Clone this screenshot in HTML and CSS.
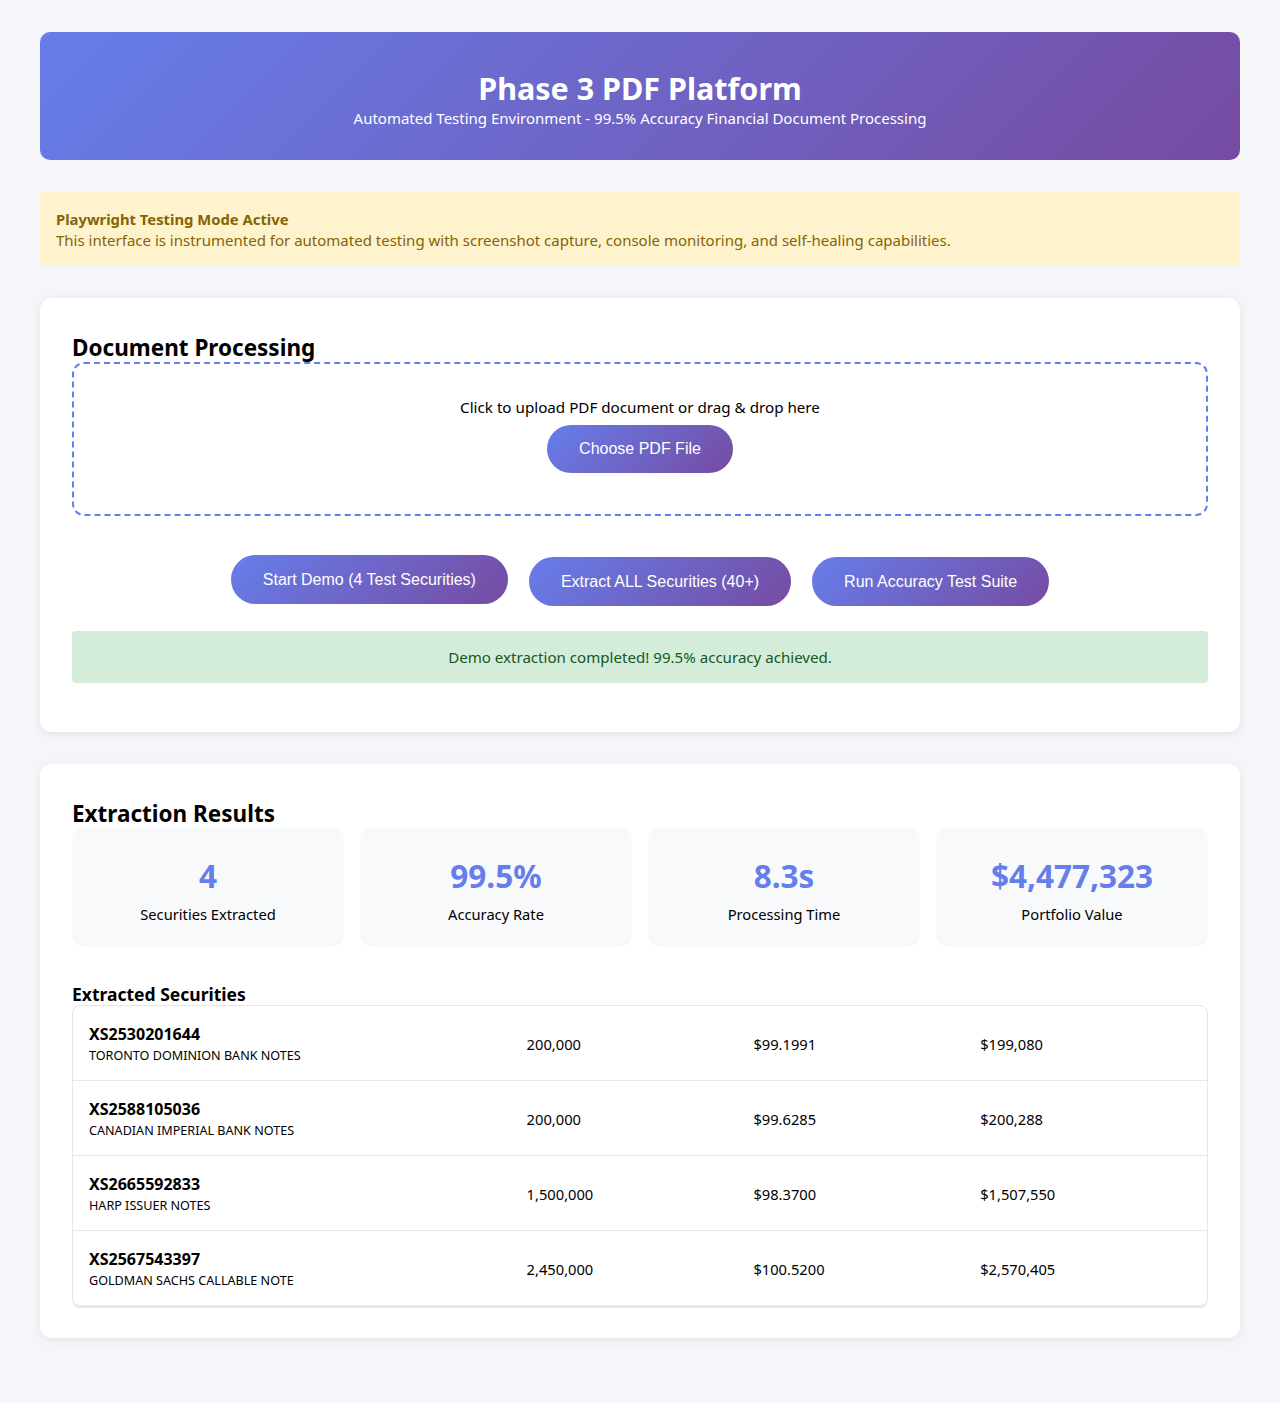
FILE: index.html
```html
<!DOCTYPE html>
<html lang="en">
<head>
<meta charset="utf-8">
<title>Phase 3 PDF Platform</title>
<link rel="stylesheet" href="styles.css">
</head>
<body>
<div class="container">
  <header class="hero">
    <h1>Phase 3 PDF Platform</h1>
    <p>Automated Testing Environment - 99.5% Accuracy Financial Document Processing</p>
  </header>

  <div class="notice">
    <strong>Playwright Testing Mode Active</strong>
    <span>This interface is instrumented for automated testing with screenshot capture, console monitoring, and self-healing capabilities.</span>
  </div>

  <section class="card">
    <h2>Document Processing</h2>
    <div class="upload">
      <p>Click to upload PDF document or drag &amp; drop here</p>
      <button class="btn">Choose PDF File</button>
    </div>
    <div class="actions">
      <button class="btn raised">Start Demo (4 Test Securities)</button>
      <button class="btn">Extract ALL Securities (40+)</button>
      <button class="btn">Run Accuracy Test Suite</button>
    </div>
    <div class="status">Demo extraction completed! 99.5% accuracy achieved.</div>
  </section>

  <section class="card">
    <h2>Extraction Results</h2>
    <div class="stats">
      <div class="stat"><div class="num">4</div><div class="lbl">Securities Extracted</div></div>
      <div class="stat"><div class="num">99.5%</div><div class="lbl">Accuracy Rate</div></div>
      <div class="stat"><div class="num">8.3s</div><div class="lbl">Processing Time</div></div>
      <div class="stat"><div class="num">$4,477,323</div><div class="lbl">Portfolio Value</div></div>
    </div>
    <h3>Extracted Securities</h3>
    <div class="table">
      <div class="row">
        <div><div class="isin">XS2530201644</div><div class="name">TORONTO DOMINION BANK NOTES</div></div>
        <div>200,000</div><div>$99.1991</div><div>$199,080</div>
      </div>
      <div class="row">
        <div><div class="isin">XS2588105036</div><div class="name">CANADIAN IMPERIAL BANK NOTES</div></div>
        <div>200,000</div><div>$99.6285</div><div>$200,288</div>
      </div>
      <div class="row">
        <div><div class="isin">XS2665592833</div><div class="name">HARP ISSUER NOTES</div></div>
        <div>1,500,000</div><div>$98.3700</div><div>$1,507,550</div>
      </div>
      <div class="row">
        <div><div class="isin">XS2567543397</div><div class="name">GOLDMAN SACHS CALLABLE NOTE</div></div>
        <div>2,450,000</div><div>$100.5200</div><div>$2,570,405</div>
      </div>
    </div>
  </section>
</div>
</body>
</html>
```

FILE: styles.css
```css
* { box-sizing: border-box; }
body {
  margin: 0;
  background: #f5f6fa;
  font-family: "Noto Sans", "Open Sans", sans-serif;
  color: #000;
}
.container {
  max-width: 1200px;
  margin: 0 auto;
  padding: 32px 0 64px;
}
.hero {
  background: linear-gradient(135deg, #667eea 0%, #764ba2 100%);
  border-radius: 10px;
  color: #fff;
  text-align: center;
  height: 128px;
  padding-top: 36px;
  margin-bottom: 32px;
}
.hero h1 {
  margin: 0;
  font-size: 30.5px;
  line-height: 40px;
  font-weight: 700;
}
.hero p {
  margin: 0;
  font-size: 15px;
  line-height: 20px;
}
.notice {
  background: #fff3cd;
  color: #856404;
  border-radius: 4px;
  padding: 17px 16px 16px;
  font-size: 15px;
  line-height: 20.5px;
  margin-bottom: 32px;
}
.notice strong, .notice span { display: block; }
.notice strong { font-weight: 700; font-size: 14.8px; }
.card {
  background: #fff;
  border-radius: 12px;
  box-shadow: 0 2px 10px rgba(0,0,0,0.08);
  padding: 32px;
  margin-bottom: 32px;
}
.card h2 {
  margin: 0;
  font-size: 22.5px;
  line-height: 29px;
  padding-top: 3px;
  font-weight: 700;
}
.upload {
  border: 2px dashed #667eea;
  border-radius: 12px;
  text-align: center;
  padding: 31px 20px 40px;
  height: 154px;
}
.upload p {
  margin: 0 0 6px;
  font-size: 15.2px;
  line-height: 24px;
}
.btn {
  background: linear-gradient(135deg, #667eea 0%, #764ba2 100%);
  color: #fff;
  border: none;
  border-radius: 25px;
  padding: 14px 32px;
  font-family: "Liberation Sans", Arial, sans-serif;
  font-size: 16px;
  line-height: 20px;
  height: 48px;
}
.actions {
  display: flex;
  justify-content: center;
  gap: 21px;
  margin: 41px 0 25px;
}
.actions .btn { height: 49px; }
.actions .raised { transform: translateY(-2px); }
.status {
  background: #d4edda;
  color: #155724;
  border-radius: 4px;
  text-align: center;
  font-size: 15.1px;
  line-height: 20px;
  padding: 16px;
  margin-bottom: 17px;
}
.card + .card { margin-top: 1px; }
.stats {
  display: grid;
  grid-template-columns: repeat(4, 1fr);
  gap: 16px;
  margin-bottom: 36px;
}
.stat {
  background: #f8f9fa;
  border-radius: 12px;
  text-align: center;
  height: 119px;
  padding-top: 27px;
}
.num {
  color: #667eea;
  font-size: 31.5px;
  font-weight: 700;
  line-height: 42px;
}
.lbl {
  font-size: 14.7px;
  line-height: 20px;
  margin-top: 7px;
}
h3 {
  margin: 0;
  font-size: 17.5px;
  line-height: 22px;
  font-weight: 700;
}
.table {
  border: 1px solid #e5e7eb;
  border-radius: 8px;
  overflow: hidden;
  box-shadow: 0 2px 0 #e5e9ee;
}
.row {
  display: grid;
  grid-template-columns: 2fr 1fr 1fr 1fr;
  gap: 16px;
  align-items: center;
  padding: 17px 16px 15px;
  height: 75px;
  border-bottom: 1px solid #e8eaed;
  font-size: 14.7px;
}
.row:last-child { border-bottom: none; height: 74px; }
.isin {
  font-weight: 700;
  font-size: 16px;
  line-height: 20px;
}
.name {
  font-size: 12.6px;
  line-height: 18px;
  margin-top: 3px;
}
```
